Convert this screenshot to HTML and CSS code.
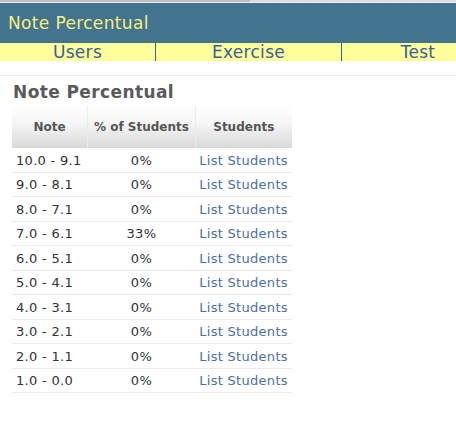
FILE: index.html
```html
<!DOCTYPE html>
<html>
<head>
<meta charset="utf-8">
<link rel="stylesheet" href="styles.css">
</head>
<body>
<div class="topline"></div>
<div class="header"><span class="title">Note Percentual</span></div>
<div class="navwrap">
  <nav class="nav">
    <a class="nav-item">Users</a>
    <a class="nav-item">Exercise</a>
    <a class="nav-item">Test</a>
  </nav>
</div>
<div class="gap"></div>
<main class="content">
  <h2 class="heading">Note Percentual</h2>
  <table class="grid">
    <thead>
      <tr><th class="c1">Note</th><th class="c2">% of Students</th><th class="c3">Students</th></tr>
    </thead>
    <tbody>
      <tr><td class="note">10.0 - 9.1</td><td class="pct">0%</td><td class="lnk"><a>List Students</a></td></tr>
      <tr><td class="note">9.0 - 8.1</td><td class="pct">0%</td><td class="lnk"><a>List Students</a></td></tr>
      <tr><td class="note">8.0 - 7.1</td><td class="pct">0%</td><td class="lnk"><a>List Students</a></td></tr>
      <tr><td class="note">7.0 - 6.1</td><td class="pct">33%</td><td class="lnk"><a>List Students</a></td></tr>
      <tr><td class="note">6.0 - 5.1</td><td class="pct">0%</td><td class="lnk"><a>List Students</a></td></tr>
      <tr><td class="note">5.0 - 4.1</td><td class="pct">0%</td><td class="lnk"><a>List Students</a></td></tr>
      <tr><td class="note">4.0 - 3.1</td><td class="pct">0%</td><td class="lnk"><a>List Students</a></td></tr>
      <tr><td class="note">3.0 - 2.1</td><td class="pct">0%</td><td class="lnk"><a>List Students</a></td></tr>
      <tr><td class="note">2.0 - 1.1</td><td class="pct">0%</td><td class="lnk"><a>List Students</a></td></tr>
      <tr><td class="note">1.0 - 0.0</td><td class="pct">0%</td><td class="lnk"><a>List Students</a></td></tr>
    </tbody>
  </table>
</main>
</body>
</html>
```
FILE: styles.css
```css
html, body {
  margin: 0;
  padding: 0;
  background: #ffffff;
  font-family: "DejaVu Sans", Verdana, sans-serif;
  overflow: hidden;
}
.topline {
  height: 2px;
  background: linear-gradient(to right, #bdbdbd 0, #bdbdbd 250px, #dcdcdc 250px);
  border-bottom: 1px solid #eef0f2;
}
.header {
  height: 40px;
  background: #42738f;
  display: flex;
  align-items: center;
  padding-left: 8px;
}
.title {
  color: #f4f07c;
  font-size: 17px;
  letter-spacing: 0.35px;
  margin-top: 0;
}
.navwrap {
  width: 100%;
  overflow: hidden;
  background: #ffff99;
}
.nav {
  display: grid;
  grid-template-columns: 156px 186px 152px;
  width: 494px;
  height: 18px;
}
.nav-item {
  color: #3660a0;
  font-size: 17px;
  letter-spacing: 0.3px;
  line-height: 18px;
  text-align: center;
  border-right: 1px solid #3660a0;
}
.nav-item:last-child {
  border-right: none;
}
.gap {
  height: 14px;
  border-bottom: 1px solid #e8e8e8;
}
.content {
  padding: 5px 12px 0 12px;
}
.heading {
  margin: 0 0 2px 1px;
  font-size: 17px;
  letter-spacing: 0.4px;
  font-weight: bold;
  color: #5a5a5a;
  line-height: 23px;
}
.grid {
  border-collapse: collapse;
  width: 280px;
  font-size: 13px;
  letter-spacing: 0.3px;
}
.grid th {
  height: 42px;
  padding: 0;
  font-size: 12px;
  letter-spacing: 0;
  font-weight: bold;
  color: #555555;
  background: linear-gradient(to bottom, #ffffff 0%, #f4f4f4 45%, #d9d9d9 100%);
  border-left: 1px solid #ececec;
  text-align: center;
}
.grid th.c1 { width: 76px; border-left: none; }
.grid th.c2 { width: 107px; }
.grid th.c3 { width: 97px; }
.grid td {
  height: 22.5px;
  padding: 1px 0 0 0;
  border-bottom: 1px solid #ececec;
  color: #333333;
}
.grid td.note {
  padding-left: 4px;
}
.grid td.pct {
  text-align: center;
}
.grid td.lnk {
  text-align: center;
}
.grid td.lnk a {
  color: #4a6fa8;
}
```
